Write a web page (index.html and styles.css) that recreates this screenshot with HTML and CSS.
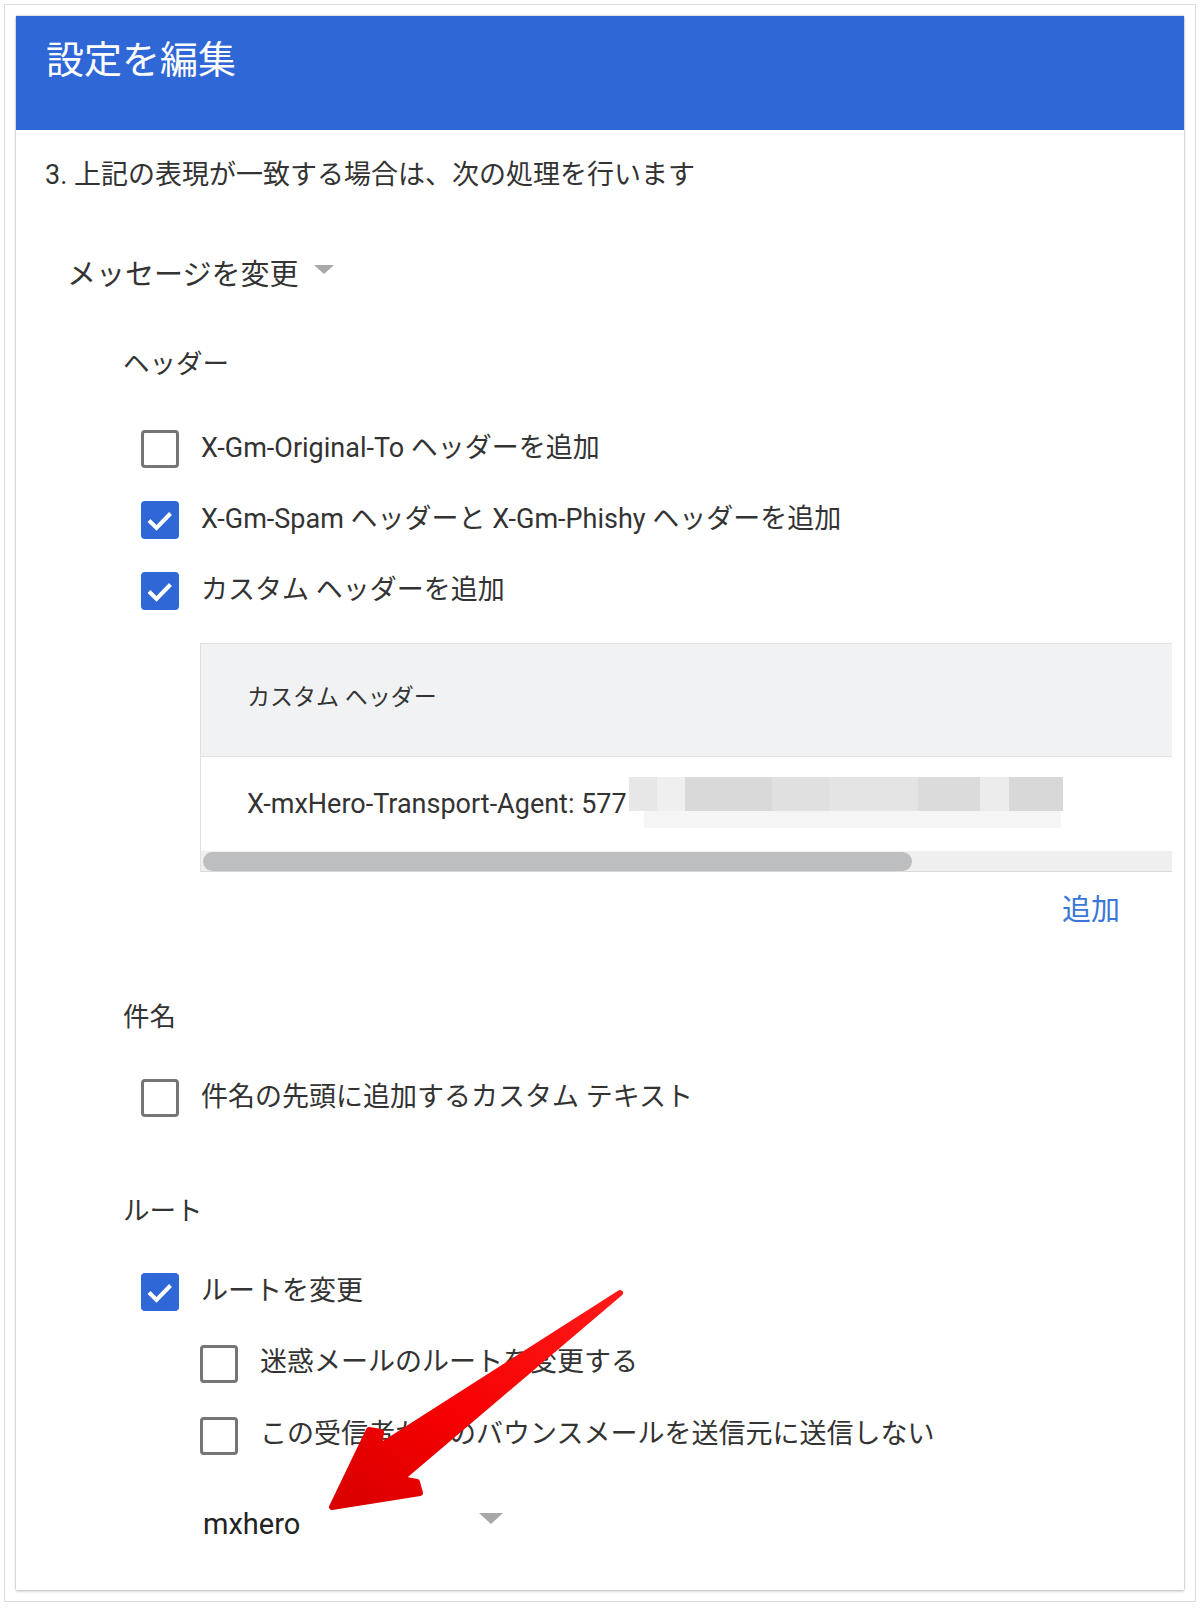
FILE: index.html
```html
<!DOCTYPE html>
<html lang="ja">
<head>
    <meta charset="UTF-8">
    <meta name="viewport" content="width=device-width, initial-scale=1.0">
    <title>設定を編集</title>
    <link rel="stylesheet" href="styles.css">
</head>
<body>
    <div class="frame">
        <div class="card">
            <div class="card-header">
                <h1>設定を編集</h1>
            </div>
            <div class="card-body">
                <p class="intro">3. 上記の表現が一致する場合は、次の処理を行います</p>
                <div class="action-select">メッセージを変更<span class="caret"></span></div>

                <div class="section-label">ヘッダー</div>
                <div class="options">
                    <div class="option"><span class="box"></span>X-Gm-Original-To ヘッダーを追加</div>
                    <div class="option"><span class="box checked"><svg viewBox="0 0 38 38"><polyline points="8,19.5 15.5,27 29.5,12.5"/></svg></span>X-Gm-Spam ヘッダーと X-Gm-Phishy ヘッダーを追加</div>
                    <div class="option"><span class="box checked"><svg viewBox="0 0 38 38"><polyline points="8,19.5 15.5,27 29.5,12.5"/></svg></span>カスタム ヘッダーを追加</div>
                </div>
                <div class="header-table">
                    <div class="th">カスタム ヘッダー</div>
                    <div class="td">X-mxHero-Transport-Agent: 577<span class="redacted"></span></div>
                    <div class="scrollbar"><div class="thumb"></div></div>
                </div>
                <div class="add-link"><a href="#">追加</a></div>

                <div class="section-label subject">件名</div>
                <div class="options">
                    <div class="option"><span class="box"></span>件名の先頭に追加するカスタム テキスト</div>
                </div>

                <div class="section-label route">ルート</div>
                <div class="options">
                    <div class="option"><span class="box checked"><svg viewBox="0 0 38 38"><polyline points="8,19.5 15.5,27 29.5,12.5"/></svg></span>ルートを変更</div>
                    <div class="option nested"><span class="box"></span>迷惑メールのルートを変更する</div>
                    <div class="option nested"><span class="box"></span>この受信者からのバウンスメールを送信元に送信しない</div>
                </div>
                <div class="route-select">mxhero<span class="caret big"></span></div>
            </div>

            <!-- annotation arrow -->
            <svg class="arrow" viewBox="0 0 320 245" width="320" height="245">
                <defs>
                    <linearGradient id="red" x1="1" y1="0" x2="0" y2="1">
                        <stop offset="0" stop-color="#ff1a1a"/>
                        <stop offset="0.6" stop-color="#f50000"/>
                        <stop offset="1" stop-color="#d80000"/>
                    </linearGradient>
                </defs>
                <path d="M300 13 L59 167 L61 152 L49 150 L12 227 L100 213 L97 202 L81 199 Z"/>
            </svg>
        </div>
    </div>
</body>
</html>
```

FILE: styles.css
```css
body {
    margin: 4px;
    background: #fff;
    font-family: Roboto, "Noto Sans CJK JP", sans-serif;
    color: #333;
}
.frame {
    border: 1px solid #dcdcdc;
    padding: 11px;
}
.card {
    position: relative;
    background: #fff;
    box-shadow: 0 0 2px rgba(0, 0, 0, 0.35), 0 2px 3px rgba(0, 0, 0, 0.12);
}
.card-header {
    background: #3067d6;
    height: 114px;
    box-sizing: border-box;
    padding: 22px 0 0 30px;
}
.card-header h1 {
    margin: 0;
    color: #fff;
    font-size: 38px;
    font-weight: normal;
    line-height: 44px;
}
.card-body {
    padding: 0 12px 46px 29px;
}
.intro {
    margin: 25px 0 0;
    height: 40px;
    line-height: 40px;
    font-size: 27px;
}
.action-select {
    margin: 57px 0 0 22px;
    height: 40px;
    display: flex;
    align-items: center;
    font-size: 29px;
}
.caret {
    width: 0;
    height: 0;
    border-left: 10px solid transparent;
    border-right: 10px solid transparent;
    border-top: 9px solid #a8a8a8;
    margin-left: 16px;
    margin-top: -5px;
}
.caret.big {
    border-left-width: 12px;
    border-right-width: 12px;
    border-top-width: 11px;
    margin-top: -12px;
}
.section-label {
    margin: 52px 0 0 78px;
    height: 40px;
    line-height: 40px;
    font-size: 26.5px;
}
.section-label.subject {
    margin-top: 70px;
}
.section-label.route {
    margin-top: 59px;
}
.options {
    margin: 28px 0 0 96px;
}
.subject + .options,
.route + .options {
    margin-top: 24px;
}
.option {
    height: 71px;
    display: flex;
    align-items: center;
    gap: 22px;
    font-size: 27px;
    white-space: nowrap;
    line-height: 36px;
}
.option.nested {
    height: 72px;
    margin-left: 59px;
}
.box {
    width: 38px;
    height: 38px;
    box-sizing: border-box;
    border: 3px solid #757575;
    border-radius: 4px;
    flex-shrink: 0;
    margin-top: 3px;
}
.box.checked {
    background: #3067d6;
    border: none;
}
.box svg {
    display: block;
    width: 38px;
    height: 38px;
    fill: none;
    stroke: #fff;
    stroke-width: 4;
}
.header-table {
    margin: 18px 0 0 155px;
    border-left: 1px solid #e0e0e0;
    border-top: 1px solid #e0e0e0;
    border-bottom: 1px solid #d9d9d9;
}
.th {
    height: 113px;
    box-sizing: border-box;
    padding: 0 0 10px 46px;
    background: #f1f2f3;
    border-bottom: 1px solid #e0e0e0;
    display: flex;
    align-items: center;
    font-size: 23px;
}
.td {
    height: 94px;
    padding-left: 46px;
    display: flex;
    align-items: center;
    font-size: 27px;
    white-space: nowrap;
}
.redacted {
    position: relative;
    width: 434px;
    height: 51px;
    margin-left: 2px;
    margin-top: -4px;
    background: linear-gradient(to right, #e7e7e7 0 28px, #efefef 28px 56px, #d9d9d9 56px 143px, #e0e0e0 143px 201px, #e4e4e4 201px 289px, #dbdbdb 289px 351px, #ececec 351px 380px, #d8d8d8 380px 434px) top left / 434px 34px no-repeat;
}
.redacted::after {
    content: "";
    position: absolute;
    left: 15px;
    right: 2px;
    bottom: 0;
    height: 17px;
    background: #f5f5f5;
}
.scrollbar {
    height: 20px;
    background: #efefef;
    display: flex;
    align-items: center;
}
.thumb {
    width: 709px;
    height: 19px;
    margin-left: 2px;
    background: #bdbebf;
    border-radius: 10px;
}
.add-link {
    margin-top: 15px;
    height: 40px;
    display: flex;
    justify-content: flex-end;
    align-items: center;
    padding-right: 52px;
}
.add-link a {
    color: #3a77d9;
    text-decoration: none;
    font-size: 29px;
}
.route-select {
    margin: 34px 0 0 158px;
    width: 300px;
    height: 40px;
    display: flex;
    align-items: center;
    justify-content: space-between;
    font-size: 29px;
    color: #222;
}
.arrow {
    position: absolute;
    left: 304px;
    top: 1264px;
    pointer-events: none;
}
.arrow path {
    fill: url(#red);
    stroke: url(#red);
    stroke-width: 6;
    stroke-linejoin: round;
}
```
